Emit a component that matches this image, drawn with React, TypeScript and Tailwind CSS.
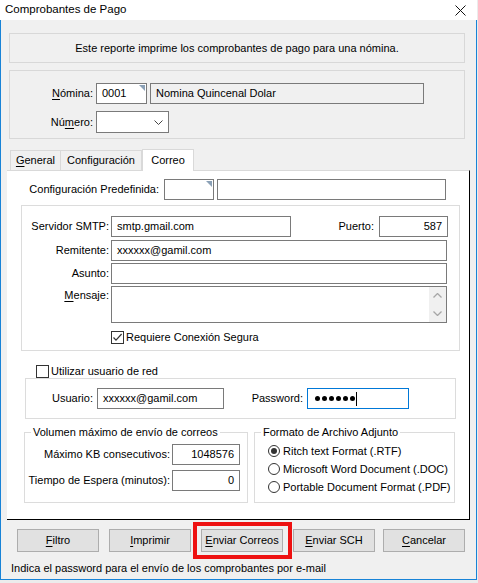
import React from "react";

type InputProps = {
  className?: string;
  value?: string;
  right?: boolean;
  corner?: boolean;
};

function Input({ className = "", value = "", right = false, corner = false }: InputProps) {
  return (
    <div
      className={`relative flex h-[21px] items-center border border-[#7a7a7a] px-[5px] ${
        right ? "justify-end" : ""
      } ${className}`}
    >
      <span className="whitespace-nowrap leading-none">{value}</span>
      {corner && (
        <span className="absolute right-[1px] top-[1px] h-0 w-0 border-l-[6px] border-t-[6px] border-l-transparent border-t-[#8aa0b6]" />
      )}
    </div>
  );
}

function U({ children }: { children: React.ReactNode }) {
  return <span className="underline decoration-1 underline-offset-2">{children}</span>;
}

function Check({ checked = false }: { checked?: boolean }) {
  return (
    <span className="flex h-[13px] w-[13px] shrink-0 items-center justify-center border border-[#333] bg-white">
      {checked && (
        <svg width="11" height="11" viewBox="0 0 11 11">
          <path d="M1.5 5.5 L4 8.2 L9.6 2" fill="none" stroke="#333" strokeWidth="1.2" />
        </svg>
      )}
    </span>
  );
}

function Radio({ checked = false, label }: { checked?: boolean; label: string }) {
  return (
    <div className="flex h-[18px] items-center">
      <span className="ml-[13px] flex h-[12px] w-[12px] items-center justify-center rounded-full border border-[#333] bg-white">
        {checked && <span className="h-[6px] w-[6px] rounded-full bg-[#333]" />}
      </span>
      <span className="ml-[3px] whitespace-nowrap">{label}</span>
    </div>
  );
}

function Button({ children }: { children: React.ReactNode }) {
  return (
    <div className="flex h-[23px] w-[82px] items-center justify-center whitespace-nowrap border border-[#adadad] bg-[#e1e1e1]">
      {children}
    </div>
  );
}

export default function App() {
  return (
    <div className="h-[583px] w-[478px] overflow-hidden bg-[#ececec] font-['Liberation_Sans',Arial,sans-serif] text-[11px] text-black">
      {/* title bar */}
      <div className="flex h-[20px] w-[477px] items-center justify-between bg-white pl-[5px] pr-[11px]">
        <span className="text-[11.5px] leading-none">Comprobantes de Pago</span>
        <svg width="11" height="11" viewBox="0 0 11 11">
          <path d="M0.5 0.5 L10.5 10.5 M10.5 0.5 L0.5 10.5" stroke="#111" strokeWidth="1" />
        </svg>
      </div>

      <div className="flex h-[560px] w-[477px] flex-col border-x border-b border-[#1883d7] bg-[#f0f0f0]">
        {/* description */}
        <div className="ml-[8px] mt-[13px] flex h-[30px] w-[456px] items-center justify-center border border-[#d8d8d8]">
          Este reporte imprime los comprobantes de pago para una nómina.
        </div>

        {/* nomina */}
        <div className="ml-[8px] mt-[7px] flex h-[69px] w-[456px] flex-col border border-[#d8d8d8]">
          <div className="mt-[12px] flex h-[21px] items-center">
            <span className="w-[83px] text-right">
              <U>N</U>ómina:
            </span>
            <Input className="ml-[3px] w-[51px] bg-white" value="0001" corner />
            <Input className="ml-[3px] w-[274px] bg-[#f0f0f0]" value="Nomina Quincenal Dolar" />
          </div>
          <div className="mt-[7px] flex h-[22px] items-center">
            <span className="w-[83px] text-right">
              Nú<U>m</U>ero:
            </span>
            <div className="ml-[3px] flex h-[22px] w-[73px] items-center justify-end border border-[#7a7a7a] bg-white pr-[5px]">
              <svg width="9" height="5" viewBox="0 0 9 5">
                <path d="M0.5 0.5 L4.5 4.5 L8.5 0.5" fill="none" stroke="#444" strokeWidth="1" />
              </svg>
            </div>
          </div>
        </div>

        {/* tabs */}
        <div className="ml-[9px] mt-[10px] flex h-[21px] items-end">
          <div className="flex h-[20px] w-[51px] items-center justify-center border border-b-0 border-[#d9d9d9]">
            <span>
              <U>G</U>eneral
            </span>
          </div>
          <div className="-ml-px flex h-[20px] w-[82px] items-center justify-center border border-b-0 border-[#d9d9d9]">
            Configuración
          </div>
          <div className="relative z-10 -mb-px flex h-[22px] w-[52px] items-start justify-center border border-b-0 border-[#d9d9d9] bg-white pt-[2px]">
            Correo
          </div>
        </div>

        {/* tab panel */}
        <div className="ml-[6px] flex h-[350px] w-[463px] flex-col border-b border-r border-t border-b-black border-r-black border-t-[#d9d9d9] bg-white">
          <div className="mt-[8px] flex h-[20px] items-center">
            <span className="w-[152px] text-right">Configuración Predefinida:</span>
            <Input className="ml-[5px] h-[20px] w-[50px]" corner />
            <Input className="ml-[3px] h-[20px] w-[229px]" />
          </div>

          {/* smtp group */}
          <div className="ml-[14px] mt-[6px] flex h-[146px] w-[439px] flex-col border border-[#dcdcdc]">
            <div className="mt-[10px] flex h-[21px] items-center">
              <span className="w-[87px] text-right">Servidor SMTP:</span>
              <Input className="ml-[2px] w-[180px]" value="smtp.gmail.com" />
              <span className="w-[83px] text-right">Puerto:</span>
              <Input className="ml-[5px] w-[69px]" value="587" right />
            </div>
            <div className="mt-[3px] flex h-[21px] items-center">
              <span className="w-[87px] text-right">Remitente:</span>
              <Input className="ml-[2px] w-[336px]" value="xxxxxx@gamil.com" />
            </div>
            <div className="mt-[2px] flex h-[21px] items-center">
              <span className="w-[87px] text-right">Asunto:</span>
              <Input className="ml-[2px] w-[336px]" />
            </div>
            <div className="mt-[2px] flex h-[37px] items-start">
              <span className="mt-[1px] w-[87px] text-right">
                <U>M</U>ensaje:
              </span>
              <div className="ml-[2px] flex h-[37px] w-[336px] justify-end border border-[#7a7a7a]">
                <div className="flex w-[17px] flex-col items-center justify-between bg-[#f0f0f0] py-[6px]">
                  <svg width="9" height="5" viewBox="0 0 9 5">
                    <path d="M0.5 4.5 L4.5 0.5 L8.5 4.5" fill="none" stroke="#a6a6a6" strokeWidth="1.3" />
                  </svg>
                  <svg width="9" height="5" viewBox="0 0 9 5">
                    <path d="M0.5 0.5 L4.5 4.5 L8.5 0.5" fill="none" stroke="#a6a6a6" strokeWidth="1.3" />
                  </svg>
                </div>
              </div>
            </div>
            <div className="ml-[89px] mt-[7px] flex h-[14px] items-center">
              <Check checked />
              <span className="ml-[2px] whitespace-nowrap">Requiere Conexión Segura</span>
            </div>
          </div>

          <div className="ml-[29px] mt-[13px] flex h-[14px] items-center">
            <Check />
            <span className="ml-[2px] whitespace-nowrap">Utilizar usuario de red</span>
          </div>

          {/* user group */}
          <div className="ml-[18px] flex h-[41px] w-[431px] flex-col border border-[#dcdcdc]">
            <div className="mt-[9px] flex h-[21px] items-center">
              <span className="w-[67px] text-right">Usuario:</span>
              <Input className="ml-[4px] w-[127px]" value="xxxxxx@gamil.com" />
              <span className="w-[79px] text-right">Password:</span>
              <div className="ml-[4px] flex h-[21px] w-[102px] items-center border border-[#0078d7] pl-[7px]">
                <div className="flex gap-[2px]">
                  {[0, 1, 2, 3, 4, 5].map((i) => (
                    <span key={i} className="h-[5px] w-[5px] rounded-full bg-black" />
                  ))}
                </div>
                <span className="ml-[1px] h-[14px] w-px bg-black" />
              </div>
            </div>
          </div>

          {/* bottom groups */}
          <div className="ml-[17px] mt-[5px] flex">
            <fieldset className="m-0 h-[79px] w-[224px] border border-[#dcdcdc] p-0">
              <legend className="ml-[6px] px-[2px] leading-[16px]">Volumen máximo de envío de correos</legend>
              <div className="mt-[4px] flex h-[21px] items-center">
                <span className="w-[145px] whitespace-nowrap text-right">Máximo KB consecutivos:</span>
                <Input className="ml-[2px] w-[68px]" value="1048576" right />
              </div>
              <div className="mt-[5px] flex h-[21px] items-center">
                <span className="w-[145px] whitespace-nowrap text-right">Tiempo de Espera (minutos):</span>
                <Input className="ml-[2px] w-[68px]" value="0" right />
              </div>
            </fieldset>
            <fieldset className="m-0 ml-[6px] h-[79px] w-[201px] border border-[#dcdcdc] p-0">
              <legend className="ml-[6px] px-[2px] leading-[16px]">Formato de Archivo Adjunto</legend>
              <div className="mt-[2px] flex flex-col">
                <Radio checked label="Ritch text Format (.RTF)" />
                <Radio label="Microsoft Word Document (.DOC)" />
                <Radio label="Portable Document Format (.PDF)" />
              </div>
            </fieldset>
          </div>
        </div>

        {/* buttons */}
        <div className="ml-[16px] mt-[9px] flex gap-[10px]">
          <Button>
            <U>F</U>iltro
          </Button>
          <Button>
            <U>I</U>mprimir
          </Button>
          <div className="relative">
            <Button>
              <U>E</U>nviar Correos
            </Button>
            <span className="absolute -bottom-[7px] -left-[8px] -right-[9px] -top-[7px] border-[4px] border-[#ee1111]" />
          </div>
          <Button>
            <U>E</U>nviar SCH
          </Button>
          <div className="-ml-[2px]">
            <Button>
              <U>C</U>ancelar
            </Button>
          </div>
        </div>

        <div className="ml-[10px] mt-[8px] leading-[16px]">
          Indica el password para el envío de los comprobantes por e-mail
        </div>
      </div>
    </div>
  );
}
